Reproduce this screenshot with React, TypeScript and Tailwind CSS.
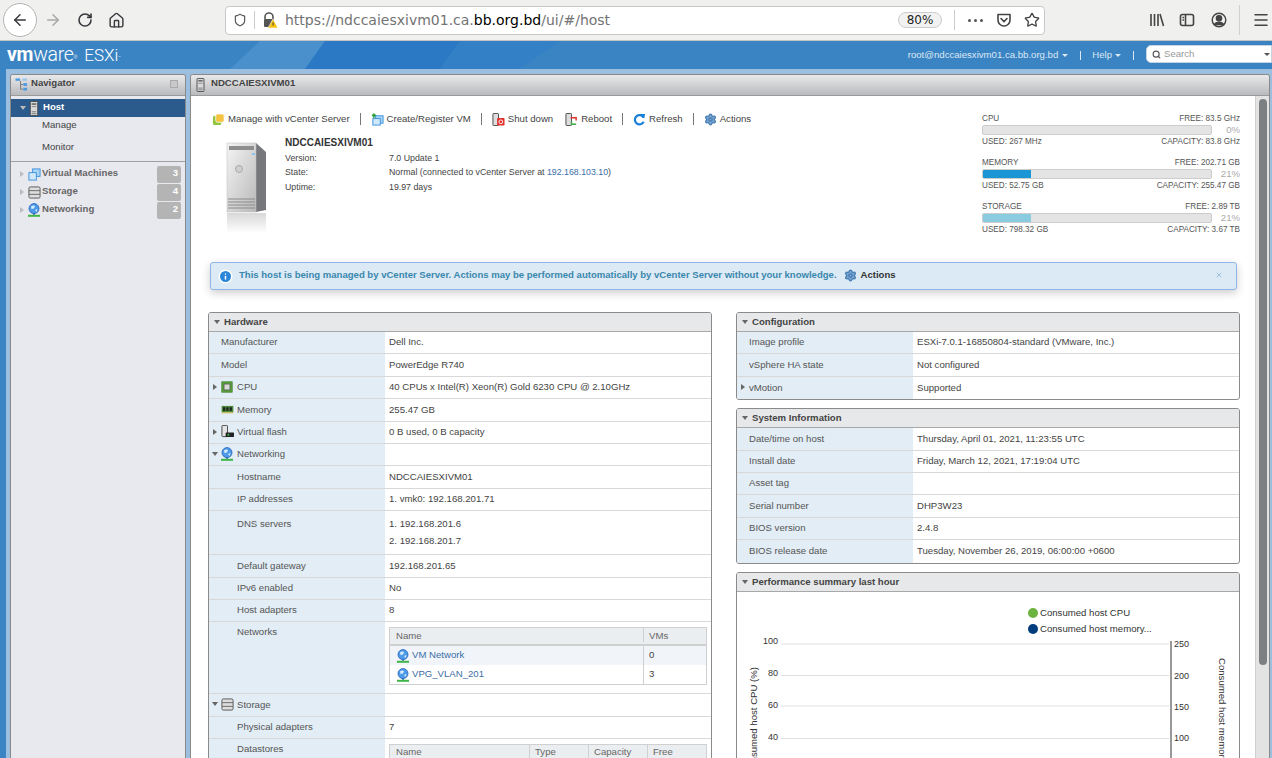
import { ArrowLeft, ArrowRight, RotateCw, Home, Shield, Star, Menu, Search, Settings, X, Info } from "lucide-react";
import type { ReactNode } from "react";

const ServerIcon = ({ className = "w-[10px] h-[15px]" }: { className?: string }) => (
  <svg viewBox="0 0 10 16" className={className}>
    <rect x="1" y="0.5" width="8" height="15" rx="1" fill="#d9d9d9" stroke="#444" />
    <rect x="2.5" y="2.5" width="5" height="1.5" fill="#555" />
    <rect x="2.5" y="5.5" width="5" height="1" fill="#888" />
    <rect x="2.5" y="11" width="5" height="1" fill="#777" />
    <rect x="2.5" y="13" width="5" height="1" fill="#777" />
  </svg>
);

const GlobeIcon = () => (
  <svg viewBox="0 0 14 14" className="w-[14px] h-[14px] shrink-0">
    <circle cx="7" cy="5.6" r="5" fill="#4d9be8" stroke="#2a63b8" strokeWidth="0.8" />
    <path d="M4 3.5 Q6 2 8 3 L7 5.5 L4.5 6 Z M8 7 L10.5 6 L9.5 9 Z" fill="#d9ecfb" />
    <rect x="6.3" y="10" width="1.4" height="2" fill="#2a63b8" />
    <rect x="1" y="11.8" width="12" height="2" fill="#3fb548" />
  </svg>
);

const StorageIcon = () => (
  <svg viewBox="0 0 14 14" className="w-[13px] h-[13px] shrink-0">
    <rect x="1" y="1" width="12" height="12" rx="1.5" fill="#ddd" stroke="#555" />
    <path d="M1 5 H13 M1 9 H13" stroke="#666" />
  </svg>
);

const VmsIcon = () => (
  <svg viewBox="0 0 14 14" className="w-[13px] h-[13px] shrink-0">
    <rect x="5" y="1" width="8" height="8" fill="#a9d6f7" stroke="#3c8fdc" />
    <rect x="1" y="5" width="8" height="8" fill="#cfe9fb" stroke="#3c8fdc" />
  </svg>
);

const CpuIcon = () => (
  <svg viewBox="0 0 14 14" className="w-[12px] h-[12px]">
    <rect x="1" y="1" width="12" height="12" fill="#5fa83c" stroke="#3d7d25" />
    <rect x="3.5" y="3.5" width="7" height="7" fill="#d9dcd6" stroke="#555" />
  </svg>
);

const RamIcon = () => (
  <svg viewBox="0 0 14 10" className="w-[13px] h-[9px]">
    <rect x="0.5" y="1" width="13" height="7" fill="#4d8a3b" />
    <rect x="2" y="2.5" width="2.5" height="4" fill="#222" />
    <rect x="5.7" y="2.5" width="2.5" height="4" fill="#222" />
    <rect x="9.4" y="2.5" width="2.5" height="4" fill="#222" />
    <rect x="0.5" y="8" width="13" height="1.2" fill="#c9b74a" />
  </svg>
);

const FlashIcon = () => (
  <svg viewBox="0 0 14 14" className="w-[13px] h-[13px]">
    <rect x="1" y="0.5" width="6" height="12" rx="0.8" fill="#e4e4e4" stroke="#444" />
    <rect x="5" y="8" width="9" height="5" rx="0.5" fill="#222" />
    <rect x="7" y="9.5" width="2" height="2" fill="#3fb548" />
  </svg>
);

const Caret = ({ open, light }: { open?: boolean; light?: boolean }) =>
  open ? (
    <span className={`w-0 h-0 border-x-[3px] border-x-transparent border-t-[4px] ${light ? "border-t-[#bbb]" : "border-t-[#666]"}`} />
  ) : (
    <span className={`w-0 h-0 border-y-[3px] border-y-transparent border-l-[4px] ${light ? "border-l-[#bbb]" : "border-l-[#666]"}`} />
  );

const Sep = () => <span className="block w-px h-[12px] bg-[#777] mx-[10px]" />;

function ToolItem({ icon, label, className }: { icon: ReactNode; label: string; className?: string }) {
  return (
    <span className={`flex items-center gap-[3px] ${className ?? ""}`}>
      <span className="w-[13px] h-[14px] flex items-center justify-center">{icon}</span>
      {label}
    </span>
  );
}

function Stat({ name, free, used, cap, pct, fill }: { name: string; free: string; used: string; cap: string; pct: string; fill?: string }) {
  return (
    <div className="h-[44px] text-[8.16px] leading-[10px] text-[#555]">
      <div className="flex justify-between"><span>{name}</span><span>FREE: {free}</span></div>
      <div className="flex items-center justify-between mt-[1px] h-[10px]">
        <div className="w-[230px] h-[10px] rounded-[2px] bg-[#e4e4e4] border border-[#ccc] overflow-hidden">
          {fill && <div className={`h-full w-[48px] ${fill}`} />}
        </div>
        <span className="text-[9.6px] text-[#aaa]">{pct}</span>
      </div>
      <div className="flex justify-between mt-[2px]"><span>USED: {used}</span><span>CAPACITY: {cap}</span></div>
    </div>
  );
}

function Row({ label, h = "h-[22.4px]", ind, icon, arrow, top, children }: { label: string; h?: string; ind?: boolean; icon?: ReactNode; arrow?: "open" | "closed"; top?: string; children?: ReactNode }) {
  return (
    <div className={`flex ${h} border-b border-[#d8d8d8] last:border-b-0`}>
      <div className={`w-[176px] shrink-0 bg-[#e2edf5] text-[#555] flex ${top ? `items-start ${top}` : "items-center pb-[1px]"} ${icon ? "" : ind ? "pl-[28px]" : arrow ? "pl-[4px]" : "pl-[12px]"}`}>
        {icon && (
          <>
            <span className="w-[11px] flex justify-center">{arrow && <Caret open={arrow === "open"} />}</span>
            <span className="w-[14px] flex justify-center">{icon}</span>
            <span className="ml-[3px]">{label}</span>
          </>
        )}
        {!icon && arrow && <Caret open={arrow === "open"} />}
        {!icon && <span className={arrow ? "ml-[4px]" : ""}>{label}</span>}
      </div>
      <div className={`flex-1 min-w-0 text-[#444] pl-[4px] pr-[4px] flex ${top ? `items-start ${top}` : "items-center pb-[1px]"}`}>{children}</div>
    </div>
  );
}

function Panel({ title, className, children }: { title: string; className?: string; children: ReactNode }) {
  return (
    <section className={`border border-[#8a8a8a] rounded-[3px] overflow-hidden ${className ?? ""}`}>
      <header className="h-[19px] bg-[#e7e8ea] border-b border-[#a8a8a8] flex items-center gap-[4px] pl-[5px] font-bold text-[#444]">
        <Caret open />
        <span>{title}</span>
      </header>
      {children}
    </section>
  );
}

const NavRow = ({ icon, label, badge }: { icon: ReactNode; label: string; badge: string }) => (
  <div className="h-[18px] flex items-center text-[#666] font-bold pl-[9px]">
    <Caret light />
    <span className="ml-[3px] w-[14px] flex justify-center">{icon}</span>
    <span className="ml-[1px] flex-1 mb-[2px]">{label}</span>
    <span className="w-[24px] h-[17px] mr-[4px] bg-[#b4b4b4] rounded-[2px] text-white text-right pr-[3px] leading-[14px]">{badge}</span>
  </div>
);

export default function App() {
  return (
    <div className="w-[1272px] h-[758px] overflow-hidden flex flex-col bg-[#3a84c3] font-['Liberation_Sans',Arial,sans-serif] text-[9.6px] leading-none">
      {/* firefox toolbar */}
      <div className="h-[41px] shrink-0 bg-[#f0f0ee] border-b border-[#c4c4c4] flex items-center text-[#38383d]">
        <span className="ml-[3px] w-[34px] h-[34px] rounded-full border border-[#b5b5b5] bg-white flex items-center justify-center">
          <ArrowLeft size={18} strokeWidth={2} />
        </span>
        <ArrowRight size={18} strokeWidth={2} className="ml-[7px] text-[#a8a8a8]" />
        <RotateCw size={16} strokeWidth={2.4} className="ml-[15px]" />
        <Home size={17} strokeWidth={2} className="ml-[15px]" />
        <div className="ml-[100px] w-[820px] h-[29px] bg-white border border-[#c8c8c8] rounded-[4px] flex items-center pr-[4px]">
          <Shield size={14} strokeWidth={2} className="ml-[7px] text-[#555]" />
          <span className="ml-[7px] w-px h-[18px] bg-[#ccc]" />
          <span className="ml-[7px] relative w-[16px] h-[16px]">
            <svg viewBox="0 0 16 16" className="w-[16px] h-[16px]">
              <path d="M3 7 V5 a4 4 0 0 1 8 0 V7" fill="none" stroke="#555" strokeWidth="1.6" />
              <rect x="2" y="7" width="10" height="8" rx="1" fill="#555" />
              <path d="M11 7 L16 16 H6 Z" fill="#f5c211" stroke="#fff" strokeWidth="0.6" />
              <rect x="10.6" y="10.5" width="0.9" height="3" fill="#333" />
            </svg>
          </span>
          <span className="ml-[7px] font-['DejaVu_Sans',sans-serif] text-[14px] text-[#737373] whitespace-nowrap">
            https://ndccaiesxivm01.ca.<span className="text-black">bb.org.bd</span>/ui/#/host
          </span>
          <span className="ml-auto w-[44px] h-[16px] border border-[#ccc] bg-[#f2f2f2] rounded-full flex items-center justify-center text-[#222] text-[12px] font-['DejaVu_Sans',sans-serif]">80%</span>
          <span className="ml-[12px] w-px h-[20px] bg-[#ccc]" />
          <span className="ml-[13px] flex gap-[3px]">
            <span className="w-[3px] h-[3px] rounded-full bg-[#555]" />
            <span className="w-[3px] h-[3px] rounded-full bg-[#555]" />
            <span className="w-[3px] h-[3px] rounded-full bg-[#555]" />
          </span>
          <svg viewBox="0 0 16 16" className="ml-[13px] w-[16px] h-[16px]" fill="none" stroke="#444" strokeWidth="1.6">
            <path d="M2 2.5 H14 V8 A6 6 0 0 1 2 8 Z" strokeLinejoin="round" />
            <path d="M5 6.5 L8 9.5 L11 6.5" strokeLinecap="round" />
          </svg>
          <Star size={16} strokeWidth={2} className="ml-[12px] text-[#444]" />
        </div>
        <svg viewBox="0 0 16 16" className="ml-[104px] w-[16px] h-[16px]" fill="none" stroke="#444" strokeWidth="1.6">
          <path d="M2 2 V14 M5.5 2 V14 M9 2 V14 M11 2 L14.5 14" />
        </svg>
        <svg viewBox="0 0 16 16" className="ml-[14px] w-[16px] h-[16px]" fill="none" stroke="#444" strokeWidth="1.6">
          <rect x="1.5" y="2.5" width="13" height="11" rx="2" />
          <path d="M6.5 2.5 V13.5 M3.5 5.5 H5 M3.5 8 H5" />
        </svg>
        <svg viewBox="0 0 16 16" className="ml-[16px] w-[16px] h-[16px]" fill="none" stroke="#444" strokeWidth="1.4">
          <circle cx="8" cy="8" r="6.8" />
          <circle cx="8" cy="6.2" r="2.6" fill="#444" />
          <path d="M3.5 12.5 C5 9.5 11 9.5 12.5 12.5 Z" fill="#444" />
        </svg>
        <span className="ml-[12px] w-px h-[30px] bg-[#d0d0d0]" />
        <Menu size={18} strokeWidth={2} className="ml-[12px] text-[#444]" />
      </div>

      {/* esxi header */}
      <div className="relative h-[28px] shrink-0 bg-[#3a84c3] flex items-center overflow-hidden text-[#dbe8f4]">
        <svg viewBox="0 0 1272 28" className="absolute inset-0 w-full h-full">
          <polygon points="230,28 260,0 325,0 305,28" fill="#4a90cc" />
          <polygon points="305,28 325,0 460,0 440,28" fill="#2b78c4" />
          <polygon points="440,28 460,0 560,0 520,28" fill="#3480c6" />
        </svg>
        <span className="relative ml-[7px] text-white text-[19.5px] tracking-[-0.3px] whitespace-nowrap font-['Roboto',sans-serif] font-light">
          <span className="font-bold">vm</span>ware<sup className="text-[5px]">®</sup>
        </span>
        <span className="relative ml-[7px] text-white text-[17px] whitespace-nowrap font-['Roboto',sans-serif] font-light">
          ESXi<sup className="text-[4px]">™</sup>
        </span>
        <span className="relative ml-auto">root@ndccaiesxivm01.ca.bb.org.bd</span>
        <span className="relative ml-[4px] w-0 h-0 border-x-[3px] border-x-transparent border-t-[3px] border-t-[#dbe8f4]" />
        <span className="relative ml-[12px] w-px h-[9px] bg-[#dbe8f4]" />
        <span className="relative ml-[11px]">Help</span>
        <span className="relative ml-[3px] w-0 h-0 border-x-[3px] border-x-transparent border-t-[3px] border-t-[#dbe8f4]" />
        <span className="relative ml-[12px] w-px h-[9px] bg-[#dbe8f4]" />
        <div className="relative ml-[12px] w-[126px] h-[18px] -mt-[2px] bg-white border border-[#c5d4e2] rounded-l-[5px] flex items-center pl-[5px] text-[#999]">
          <Search size={9} strokeWidth={3} className="text-[#555]" />
          <span className="ml-[3px]">Search</span>
          <span className="ml-auto mr-[1px] w-0 h-0 border-x-[3px] border-x-transparent border-t-[3px] border-t-[#555]" />
        </div>
      </div>

      {/* workspace */}
      <div className="flex-1 min-h-0 ml-[6px] bg-[#9cbfe0] flex pt-[5px] pl-[4px] pr-[2px] gap-[4px]">
        <aside className="w-[176px] shrink-0 border border-[#8a8a8a] border-b-0 rounded-t-[3px] bg-[#e8e9ef] overflow-hidden">
          <div className="h-[21px] pb-[4px] bg-gradient-to-b from-[#e9e9eb] to-[#b9babd] border-b border-[#9a9a9a] flex items-center pl-[4px] pr-[7px] font-bold text-[#444]">
            <svg viewBox="0 0 14 14" className="w-[13px] h-[13px] mt-[2px]" fill="none">
              <rect x="0.5" y="0.5" width="5" height="2.5" fill="#4b9be0" />
              <rect x="8" y="0.5" width="5" height="2.5" fill="#9cc7ea" />
              <path d="M6 3 V12 H9 M6 7 H9" stroke="#777" />
              <rect x="9" y="5.5" width="4" height="3" fill="#4b9be0" />
              <rect x="9" y="10.5" width="4" height="3" fill="#4b9be0" />
            </svg>
            <span className="ml-[3px] flex-1">Navigator</span>
            <span className="w-[8px] h-[8px] mt-[2px] border border-[#aaa] bg-[#c8c8ca]" />
          </div>
          <div className="mt-[3px] h-[18px] bg-[#2b5a8c] flex items-center pl-[9px] text-white font-bold">
            <Caret open light />
            <span className="ml-[3px] w-[10px]"><ServerIcon /></span>
            <span className="ml-[4px] -mt-[2px]">Host</span>
          </div>
          <div className="h-[45px] flow-root border-b border-[#a0a0a0] pl-[31px] text-[#444]">
            <div className="flex flex-col -mt-[3px]">
              <span className="h-[22px] flex items-center">Manage</span>
              <span className="h-[22px] flex items-center">Monitor</span>
            </div>
          </div>
          <div className="pt-[3px]">
            <NavRow icon={<VmsIcon />} label="Virtual Machines" badge="3" />
            <NavRow icon={<StorageIcon />} label="Storage" badge="4" />
            <NavRow icon={<GlobeIcon />} label="Networking" badge="2" />
          </div>
        </aside>

        <main className="flex-1 min-w-0 border border-[#8a8a8a] border-b-0 rounded-t-[3px] bg-white overflow-hidden flex flex-col">
          <div className="h-[21px] shrink-0 pb-[4px] bg-gradient-to-b from-[#e9e9eb] to-[#b9babd] border-b border-[#9a9a9a] flex items-center pl-[5px] font-bold text-[#444]">
            <ServerIcon className="w-[9px] h-[14px] mt-[3px]" />
            <span className="ml-[6px]">NDCCAIESXIVM01</span>
          </div>
          <div className="flex-1 min-h-0 flex">
            <div className="flex-1 min-w-0 overflow-hidden pl-[17px] pr-[15px]">
              <div className="h-[166px] flex justify-between pl-[4px]">
                <div>
                  <div className="mt-[16px] h-[14px] flex items-center text-[#444]">
                    <ToolItem label="Manage with vCenter Server" icon={
                      <svg viewBox="0 0 14 14" className="w-[13px] h-[13px]">
                        <rect x="1" y="3" width="9" height="10" rx="2" fill="#8ec63f" />
                        <rect x="4" y="1" width="9" height="9" rx="2" fill="#f5c242" stroke="#fff" strokeWidth="0.8" />
                      </svg>
                    } />
                    <Sep />
                    <ToolItem label="Create/Register VM" icon={
                      <svg viewBox="0 0 14 14" className="w-[13px] h-[13px]">
                        <rect x="5" y="3" width="8" height="8" fill="#a9d6f7" stroke="#3c8fdc" />
                        <rect x="2" y="6" width="8" height="7" fill="#cfe9fb" stroke="#3c8fdc" />
                        <path d="M3 0.5 V5 M1 2.5 H5.5" stroke="#2ea043" strokeWidth="2" />
                      </svg>
                    } />
                    <Sep />
                    <ToolItem label="Shut down" icon={
                      <svg viewBox="0 0 14 14" className="w-[13px] h-[13px]">
                        <rect x="1" y="0.5" width="6" height="13" rx="0.8" fill="#ddd" stroke="#444" />
                        <rect x="5.5" y="5.5" width="8" height="8" rx="1" fill="#e2312d" />
                        <circle cx="9.5" cy="9.5" r="2" fill="none" stroke="#fff" />
                      </svg>
                    } />
                    <ToolItem label="Reboot" className="ml-[12px]" icon={
                      <svg viewBox="0 0 14 14" className="w-[13px] h-[13px]">
                        <rect x="1" y="0.5" width="6" height="13" rx="0.8" fill="#ddd" stroke="#444" />
                        <path d="M6 5 L12 5 L12 8" stroke="#e2312d" strokeWidth="1.6" fill="none" />
                        <path d="M12 12 L7 12 L7 9" stroke="#3fa648" strokeWidth="1.6" fill="none" />
                      </svg>
                    } />
                    <Sep />
                    <ToolItem label="Refresh" icon={
                      <svg viewBox="0 0 14 14" className="w-[13px] h-[13px]" fill="none">
                        <path d="M11.5 5 A5 5 0 1 0 11.5 9.5" stroke="#1b7fdc" strokeWidth="2.4" />
                        <path d="M8 1 L13 1 L12 6 Z" fill="#1b7fdc" />
                      </svg>
                    } />
                    <Sep />
                    <ToolItem label="Actions" icon={<Settings size={13} strokeWidth={2.6} className="text-[#4a7fb5] fill-[#7aa6d2]" />} />
                  </div>
                  <div className="mt-[16px] flex pl-[14px]">
                    <svg viewBox="0 0 41 91" className="w-[41px] h-[91px] shrink-0">
                      <defs>
                        <linearGradient id="front" x1="0" x2="1" y1="0" y2="1">
                          <stop offset="0" stopColor="#f4f4f4" />
                          <stop offset="1" stopColor="#b9b9b9" />
                        </linearGradient>
                        <linearGradient id="reflect" x1="0" x2="0" y1="0" y2="1">
                          <stop offset="0" stopColor="#d8d8d8" />
                          <stop offset="1" stopColor="#ffffff" />
                        </linearGradient>
                      </defs>
                      <polygon points="30,1 40,10 40,68 30,70" fill="#77787c" />
                      <rect x="1" y="1" width="29" height="69" fill="url(#front)" stroke="#bdbdbd" strokeWidth="0.5" />
                      <rect x="3" y="4" width="25" height="4" fill="#8e8e8e" />
                      <rect x="26" y="11" width="3" height="2" fill="#8cc6ee" />
                      <circle cx="13" cy="27" r="3.5" fill="#cfcfcf" stroke="#aaa" />
                      <path d="M2 57 H29 M2 60 H29 M2 63 H29 M2 66 H29" stroke="#8a8a8a" />
                      <rect x="1" y="71" width="39" height="20" fill="url(#reflect)" />
                    </svg>
                    <div className="ml-[18px] -mt-[5px] text-[#444] text-[8.8px]">
                      <div className="text-[10px] leading-[12px] font-bold text-[#333] mb-[2px]">NDCCAIESXIVM01</div>
                      {[
                        ["Version:", "7.0 Update 1"],
                        ["State:", null],
                        ["Uptime:", "19.97 days"],
                      ].map(([k, v]) => (
                        <div key={k} className="flex h-[14.5px] items-center whitespace-nowrap">
                          <span className="w-[104px]">{k}</span>
                          <span>
                            {v ?? (
                              <>
                                Normal (connected to vCenter Server at <span className="text-[#3a6ea5]">192.168.103.10</span>)
                              </>
                            )}
                          </span>
                        </div>
                      ))}
                    </div>
                  </div>
                </div>
                <div className="w-[258px] pt-[18px]">
                  <Stat name="CPU" free="83.5 GHz" used="267 MHz" cap="83.8 GHz" pct="0%" />
                  <Stat name="MEMORY" free="202.71 GB" used="52.75 GB" cap="255.47 GB" pct="21%" fill="bg-[#1a96d4]" />
                  <Stat name="STORAGE" free="2.89 TB" used="798.32 GB" cap="3.67 TB" pct="21%" fill="bg-[#8accdf]" />
                </div>
              </div>

              <div className="ml-[2px] mr-[3px] h-[28px] bg-[#dbeaf5] border border-[#8fb5ea] rounded-[3px] shadow-[0_3px_8px_rgba(0,0,0,0.2)] flex items-center pl-[7px] pr-[13px] font-bold text-[#3a87ad] text-[9.55px]">
                <Info size={15} strokeWidth={2.4} className="text-white fill-[#2c86d8] mt-[1px]" />
                <span className="ml-[6px] whitespace-nowrap -mt-[2px]">This host is being managed by vCenter Server. Actions may be performed automatically by vCenter Server without your knowledge.</span>
                <Settings size={13} strokeWidth={2.6} className="ml-[7px] -mt-[2px] text-[#4a7fb5] fill-[#7aa6d2]" />
                <span className="ml-[4px] -mt-[2px] text-[#333]">Actions</span>
                <X size={8} strokeWidth={3} className="ml-auto -mt-[2px] text-[#9cc0d8]" />
              </div>

              <div className="mt-[22px] flex gap-[24px] items-start">
                <Panel title="Hardware" className="w-[504px] shrink-0">
                  <Row label="Manufacturer">Dell Inc.</Row>
                  <Row label="Model">PowerEdge R740</Row>
                  <Row label="CPU" arrow="closed" icon={<CpuIcon />}>40 CPUs x Intel(R) Xeon(R) Gold 6230 CPU @ 2.10GHz</Row>
                  <Row label="Memory" icon={<RamIcon />}>255.47 GB</Row>
                  <Row label="Virtual flash" arrow="closed" icon={<FlashIcon />}>0 B used, 0 B capacity</Row>
                  <Row label="Networking" arrow="open" icon={<GlobeIcon />} />
                  <Row label="Hostname" ind>NDCCAIESXIVM01</Row>
                  <Row label="IP addresses" ind>1. vmk0: 192.168.201.71</Row>
                  <Row label="DNS servers" ind h="h-[44px]" top="pt-[8px]">
                    <div className="leading-[17px] -mt-[4px]">
                      <div>1. 192.168.201.6</div>
                      <div>2. 192.168.201.7</div>
                    </div>
                  </Row>
                  <Row label="Default gateway" ind>192.168.201.65</Row>
                  <Row label="IPv6 enabled" ind>No</Row>
                  <Row label="Host adapters" ind>8</Row>
                  <Row label="Networks" ind h="h-[72px]" top="pt-[5px]">
                    <div className="w-full border border-[#d0d0d0] text-[#666]">
                      <div className="h-[18px] pb-[2px] bg-[#ebeef0] border-b-2 border-[#d0d0d0] flex items-center">
                        <span className="w-[254px] pl-[6px] border-r border-[#d0d0d0] h-full flex items-center">Name</span>
                        <span className="pl-[5px]">VMs</span>
                      </div>
                      <div className="h-[19px] bg-[#f1f5fa] flex items-center">
                        <span className="w-[254px] pl-[6px] border-r border-[#d0d0d0] h-full flex items-center gap-[2px] text-[#3a6ea5]"><GlobeIcon /><span className="-mt-[3px]">VM Network</span></span>
                        <span className="pl-[5px] -mt-[3px] text-[#444]">0</span>
                      </div>
                      <div className="h-[19px] flex items-center">
                        <span className="w-[254px] pl-[6px] border-r border-[#d0d0d0] h-full flex items-center gap-[2px] text-[#3a6ea5]"><GlobeIcon /><span className="-mt-[3px]">VPG_VLAN_201</span></span>
                        <span className="pl-[5px] -mt-[3px] text-[#444]">3</span>
                      </div>
                    </div>
                  </Row>
                  <Row label="Storage" arrow="open" icon={<StorageIcon />} />
                  <Row label="Physical adapters" ind>7</Row>
                  <Row label="Datastores" ind h="h-[60px]" top="pt-[5px]">
                    <div className="w-full border border-[#d0d0d0] text-[#666]">
                      <div className="h-[18px] pb-[2px] bg-[#ebeef0] border-b-2 border-[#d0d0d0] flex items-center">
                        <span className="w-[140px] pl-[6px] border-r border-[#d0d0d0] h-full flex items-center">Name</span>
                        <span className="w-[59px] pl-[5px] border-r border-[#d0d0d0] h-full flex items-center">Type</span>
                        <span className="w-[59px] pl-[5px] border-r border-[#d0d0d0] h-full flex items-center">Capacity</span>
                        <span className="pl-[5px]">Free</span>
                      </div>
                    </div>
                  </Row>
                </Panel>

                <div className="w-[504px] shrink-0 flex flex-col gap-[8px]">
                  <Panel title="Configuration">
                    <Row label="Image profile">ESXi-7.0.1-16850804-standard (VMware, Inc.)</Row>
                    <Row label="vSphere HA state">Not configured</Row>
                    <Row label="vMotion" arrow="closed">Supported</Row>
                  </Panel>
                  <Panel title="System Information">
                    <Row label="Date/time on host">Thursday, April 01, 2021, 11:23:55 UTC</Row>
                    <Row label="Install date">Friday, March 12, 2021, 17:19:04 UTC</Row>
                    <Row label="Asset tag" />
                    <Row label="Serial number">DHP3W23</Row>
                    <Row label="BIOS version">2.4.8</Row>
                    <Row label="BIOS release date">Tuesday, November 26, 2019, 06:00:00 +0600</Row>
                  </Panel>
                  <Panel title="Performance summary last hour">
                    <svg viewBox="0 0 502 200" className="w-[502px] h-[200px] font-['Liberation_Sans',Arial,sans-serif]" fontSize="9" fill="#333">
                      <circle cx="296" cy="21" r="5" fill="#6cb33f" />
                      <text x="303" y="24" fontSize="9.6">Consumed host CPU</text>
                      <circle cx="296" cy="37" r="5" fill="#003d7c" />
                      <text x="303" y="40" fontSize="9.6">Consumed host memory...</text>
                      {[52, 83.5, 114, 146.5].map((y) => (
                        <line key={y} x1="44" x2="432" y1={y} y2={y} stroke="#e0e0e0" />
                      ))}
                      <line x1="434" x2="434" y1="49" y2="200" stroke="#333" />
                      <text x="41" y="52" textAnchor="end">100</text>
                      <text x="41" y="84" textAnchor="end">80</text>
                      <text x="41" y="116" textAnchor="end">60</text>
                      <text x="41" y="148" textAnchor="end">40</text>
                      <text x="437" y="55">250</text>
                      <text x="437" y="87">200</text>
                      <text x="437" y="118">150</text>
                      <text x="437" y="149">100</text>
                      <text transform="translate(20 75) rotate(-90)" textAnchor="end" fontSize="9.6">Consumed host CPU (%)</text>
                      <text transform="translate(482 66) rotate(90)" fontSize="9.6">Consumed host memory (GB)</text>
                    </svg>
                  </Panel>
                </div>
              </div>
            </div>
            <div className="w-[14px] shrink-0 bg-[#e3e3e3] border-l border-[#cfcfcf] flex justify-center">
              <div className="w-[8px] h-[566px] mt-[3px] rounded-full bg-[#7c8082]" />
            </div>
          </div>
        </main>
      </div>
    </div>
  );
}
